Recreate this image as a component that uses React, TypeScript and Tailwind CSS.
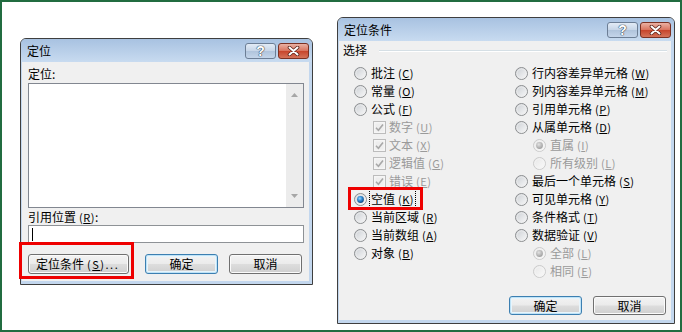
import type { ReactNode } from "react";

type Item = {
  kind: "radio" | "check";
  label: string;
  key: string;
  checked?: boolean;
  disabled?: boolean;
  indent?: boolean;
  focused?: boolean;
};

const leftItems: Item[] = [
  { kind: "radio", label: "批注", key: "C" },
  { kind: "radio", label: "常量", key: "O" },
  { kind: "radio", label: "公式", key: "F" },
  { kind: "check", label: "数字", key: "U", checked: true, disabled: true, indent: true },
  { kind: "check", label: "文本", key: "X", checked: true, disabled: true, indent: true },
  { kind: "check", label: "逻辑值", key: "G", checked: true, disabled: true, indent: true },
  { kind: "check", label: "错误", key: "E", checked: true, disabled: true, indent: true },
  { kind: "radio", label: "空值", key: "K", checked: true, focused: true },
  { kind: "radio", label: "当前区域", key: "R" },
  { kind: "radio", label: "当前数组", key: "A" },
  { kind: "radio", label: "对象", key: "B" },
];

const rightItems: Item[] = [
  { kind: "radio", label: "行内容差异单元格", key: "W" },
  { kind: "radio", label: "列内容差异单元格", key: "M" },
  { kind: "radio", label: "引用单元格", key: "P" },
  { kind: "radio", label: "从属单元格", key: "D" },
  { kind: "radio", label: "直属", key: "I", checked: true, disabled: true, indent: true },
  { kind: "radio", label: "所有级别", key: "L", disabled: true, indent: true },
  { kind: "radio", label: "最后一个单元格", key: "S" },
  { kind: "radio", label: "可见单元格", key: "Y" },
  { kind: "radio", label: "条件格式", key: "T" },
  { kind: "radio", label: "数据验证", key: "V" },
  { kind: "radio", label: "全部", key: "L", checked: true, disabled: true, indent: true },
  { kind: "radio", label: "相同", key: "E", disabled: true, indent: true },
];

function Radio({ checked, disabled }: { checked?: boolean; disabled?: boolean }) {
  return (
    <svg width="13" height="13" viewBox="0 0 13 13" className="shrink-0">
      <defs>
        <linearGradient id="rd-on" x1="0" y1="0" x2="1" y2="1">
          <stop offset="0" stopColor="#c9cdd2" />
          <stop offset="1" stopColor="#fbfbfb" />
        </linearGradient>
        <linearGradient id="rd-off" x1="0" y1="0" x2="1" y2="1">
          <stop offset="0" stopColor="#e6e6e6" />
          <stop offset="1" stopColor="#fbfbfb" />
        </linearGradient>
        <radialGradient id="rd-blue" cx="0.4" cy="0.35" r="0.7">
          <stop offset="0" stopColor="#9bd8ff" />
          <stop offset="0.5" stopColor="#2b86d0" />
          <stop offset="1" stopColor="#0d3f75" />
        </radialGradient>
        <radialGradient id="rd-gray" cx="0.4" cy="0.35" r="0.7">
          <stop offset="0" stopColor="#e2e2e2" />
          <stop offset="1" stopColor="#9c9c9c" />
        </radialGradient>
      </defs>
      <circle cx="6.5" cy="6.5" r="6" fill={disabled ? "url(#rd-off)" : "url(#rd-on)"} stroke={disabled ? "#cbcbcb" : "#8c8e90"} />
      <circle cx="6.5" cy="6.5" r="4.6" fill="none" stroke={disabled ? "#f4f4f4" : "#eeeeee"} strokeWidth="0.8" />
      {checked && <circle cx="6.5" cy="6.5" r="3.4" fill={disabled ? "url(#rd-gray)" : "url(#rd-blue)"} />}
    </svg>
  );
}

function Check() {
  return (
    <svg width="13" height="13" viewBox="0 0 13 13" className="shrink-0">
      <rect x="0.5" y="0.5" width="12" height="12" fill="#f5f5f5" stroke="#bcbcbc" />
      <rect x="2.5" y="2.5" width="8" height="8" fill="#eeeeee" />
      <path d="M3 6.8 L5.4 9.2 L10 3.6" fill="none" stroke="#a8a8a8" strokeWidth="1.6" />
    </svg>
  );
}

function Label({ text, k, disabled, focused }: { text: string; k: string; disabled?: boolean; focused?: boolean }) {
  return (
    <span
      className={`whitespace-nowrap px-px ${disabled ? "text-[#9a9a9a]" : "text-black"} ${
        focused ? "outline-1 outline-dotted outline-black" : ""
      }`}
    >
      {text}
      <span className="ml-[3px] text-[11px] tracking-[0.5px]">
        (<span className="underline underline-offset-1">{k}</span>)
      </span>
    </span>
  );
}

function Row({ item, subIndent }: { item: Item; subIndent: string }) {
  return (
    <div className={`flex h-[18px] items-center ${item.indent ? subIndent : ""}`}>
      {item.kind === "radio" ? <Radio checked={item.checked} disabled={item.disabled} /> : <Check />}
      <div className={item.kind === "radio" ? "ml-[3px]" : "ml-[2px]"}>
        <Label text={item.label} k={item.key} disabled={item.disabled} focused={item.focused} />
      </div>
    </div>
  );
}

function Button({ children, primary, className = "" }: { children: ReactNode; primary?: boolean; className?: string }) {
  return (
    <div
      className={`flex items-center justify-center rounded-[3px] border bg-[linear-gradient(to_bottom,#f3f3f3_0%,#ebebeb_48%,#dddddd_52%,#cfcfcf_100%)] ${
        primary
          ? "border-[#3c7fb1] shadow-[inset_0_0_0_1px_#bfe3f7,inset_0_0_0_2px_#e8f5fc]"
          : "border-[#707070] shadow-[inset_0_0_0_1px_#fbfbfb]"
      } ${className}`}
    >
      {children}
    </div>
  );
}

function CaptionButtons() {
  return (
    <div className="flex gap-[2px] self-start mt-[4px]">
      <div className="flex h-[16px] w-[31px] items-center justify-center rounded-[3px] border border-[#6c7e95] bg-[linear-gradient(to_bottom,#e2ebf6_0%,#c7d6e8_48%,#b0c4dc_52%,#c4d5ea_100%)]">
        <span className="font-['Liberation_Sans',sans-serif] text-[14px] font-bold leading-none text-white [text-shadow:0_0_1px_#34404f,0_0_1px_#34404f,0_0_1px_#34404f]">
          ?
        </span>
      </div>
      <div className="flex h-[16px] w-[31px] items-center justify-center rounded-[3px] border border-[#7b3123] bg-[linear-gradient(to_bottom,#eab1a3_0%,#d97560_48%,#c7452c_52%,#d4735a_100%)]">
        <svg width="13" height="10" viewBox="0 0 13 10">
          <path d="M2.5 1.5 L10.5 8.5 M10.5 1.5 L2.5 8.5" stroke="#5a2218" strokeWidth="3.6" strokeLinecap="round" />
          <path d="M2.5 1.5 L10.5 8.5 M10.5 1.5 L2.5 8.5" stroke="#ffffff" strokeWidth="2" strokeLinecap="round" />
        </svg>
      </div>
    </div>
  );
}

function Dialog({ title, className, children }: { title: string; className: string; children: ReactNode }) {
  return (
    <div className={`flex flex-col overflow-hidden rounded-t-[6px] border border-[#3f3f3f] bg-[#c3d7ee] ${className}`}>
      <div className="flex h-[23px] shrink-0 items-center justify-between bg-gradient-to-b from-[#a8c2e1] to-[#c8dbf0] pl-[6px] pr-[3px]">
        <span className="text-[12px] leading-[14px]">{title}</span>
        <CaptionButtons />
      </div>
      <div className="ml-[1px] mr-[3px] mb-[3px] flex-1 bg-[#f0f0f0]">{children}</div>
    </div>
  );
}

function Arrow({ up }: { up?: boolean }) {
  return (
    <svg width="7" height="4" viewBox="0 0 7 4">
      <path d={up ? "M0 4 L3.5 0 L7 4 Z" : "M0 0 L7 0 L3.5 4 Z"} fill="#a6a6a6" />
    </svg>
  );
}

function GotoDialog() {
  return (
    <Dialog title="定位" className="ml-[18px] mt-[36px] h-[247px] w-[293px]">
      <div className="flex flex-col pl-[6px] pt-[5px]">
        <div className="leading-[14px]">定位:</div>
        <div className="mt-[2px] flex h-[125px] w-[276px] border border-[#828790] bg-white">
          <div className="flex-1" />
          <div className="flex w-[17px] flex-col items-center justify-between bg-[#ececec] py-[9px]">
            <Arrow up />
            <Arrow />
          </div>
        </div>
        <div className="mt-[2px] leading-[14px]">
          引用位置
          <span className="ml-[3px] text-[11px] tracking-[0.5px]">
            (<span className="underline underline-offset-1">R</span>)
          </span>
          :
        </div>
        <div className="mt-[1px] flex h-[18px] w-[276px] items-center border border-[#8e9296] bg-white">
          <div className="ml-[3px] h-[13px] w-px bg-black" />
        </div>
        <div className="mt-[11px] flex">
          <Button className="h-[20px] w-[101px] justify-start pl-[7px]">
            <span>定位条件</span>
            <span className="ml-[3px] text-[11px] tracking-[1.5px]">
              (<span className="underline underline-offset-1">S</span>)...
            </span>
          </Button>
          <Button primary className="ml-[16px] h-[20px] w-[73px]">
            确定
          </Button>
          <Button className="ml-[11px] h-[20px] w-[73px]">取消</Button>
        </div>
      </div>
    </Dialog>
  );
}

function SpecialDialog() {
  return (
    <Dialog title="定位条件" className="ml-[24px] mt-[15px] h-[307px] w-[338px]">
      <div className="flex flex-col pt-[2px]">
        <div className="flex items-center pl-[4px] pr-[4px]">
          <span className="leading-[14px]">选择</span>
          <div className="ml-[12px] mt-[1px] h-[2px] flex-1 border-t border-b border-t-[#d5dfe5] border-b-white" />
        </div>
        <div className="mt-[7px] flex pl-[15px]">
          <div className="flex w-[161px] flex-col">
            {leftItems.map((it, i) => (
              <Row key={i} item={it} subIndent="pl-[19px]" />
            ))}
          </div>
          <div className="flex flex-col">
            {rightItems.map((it, i) => (
              <Row key={i} item={it} subIndent="pl-[18px]" />
            ))}
          </div>
        </div>
        <div className="mt-[16px] flex justify-end gap-[11px] pr-[5px]">
          <Button primary className="h-[19px] w-[73px]">
            确定
          </Button>
          <Button className="h-[19px] w-[73px]">取消</Button>
        </div>
      </div>
    </Dialog>
  );
}

export default function App() {
  return (
    <div className="relative flex h-[332px] w-[682px] items-start border-2 border-[#216c40] bg-white font-['Noto_Sans_CJK_SC',sans-serif] text-[12px] leading-[14px] text-black">
      <GotoDialog />
      <SpecialDialog />
      <div className="pointer-events-none absolute left-[17px] top-[240px] h-[37px] w-[115px] border-[3px] border-[#ee0000]" />
      <div className="pointer-events-none absolute left-[346px] top-[185px] h-[23px] w-[75px] border-[3px] border-[#ee0000]" />
    </div>
  );
}
